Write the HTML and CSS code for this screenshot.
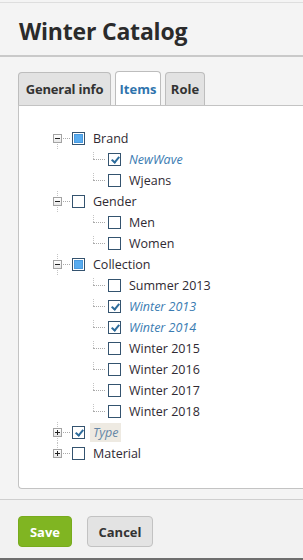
FILE: index.html
```html
<!DOCTYPE html>
<html lang="en">
<head>
    <meta charset="UTF-8">
    <meta name="viewport" content="width=device-width, initial-scale=1.0">
    <title>Winter Catalog</title>
    <link rel="stylesheet" href="styles.css">
</head>
<body>
    <div class="window">
        <header class="titlebar">Winter Catalog</header>
        <div class="body">
            <div class="tabs">
                <div class="tab general">General info</div>
                <div class="tab items active">Items</div>
                <div class="tab role">Role</div>
            </div>
            <div class="panel">
                <ul class="tree">
                    <li>
                        <div class="row root first"><span class="exp minus"></span><span class="link"></span><span class="cb partial"></span><span class="label">Brand</span></div>
                        <ul>
                            <li><div class="row child"><span class="elbow"></span><span class="cb checked"></span><span class="label sel">NewWave</span></div></li>
                            <li><div class="row child"><span class="elbow"></span><span class="cb"></span><span class="label">Wjeans</span></div></li>
                        </ul>
                    </li>
                    <li>
                        <div class="row root"><span class="exp minus"></span><span class="link"></span><span class="cb"></span><span class="label">Gender</span></div>
                        <ul>
                            <li><div class="row child"><span class="elbow"></span><span class="cb"></span><span class="label">Men</span></div></li>
                            <li><div class="row child"><span class="elbow"></span><span class="cb"></span><span class="label">Women</span></div></li>
                        </ul>
                    </li>
                    <li>
                        <div class="row root"><span class="exp minus"></span><span class="link"></span><span class="cb partial"></span><span class="label">Collection</span></div>
                        <ul>
                            <li><div class="row child"><span class="elbow"></span><span class="cb"></span><span class="label">Summer 2013</span></div></li>
                            <li><div class="row child"><span class="elbow"></span><span class="cb checked"></span><span class="label sel">Winter 2013</span></div></li>
                            <li><div class="row child"><span class="elbow"></span><span class="cb checked"></span><span class="label sel">Winter 2014</span></div></li>
                            <li><div class="row child"><span class="elbow"></span><span class="cb"></span><span class="label">Winter 2015</span></div></li>
                            <li><div class="row child"><span class="elbow"></span><span class="cb"></span><span class="label">Winter 2016</span></div></li>
                            <li><div class="row child"><span class="elbow"></span><span class="cb"></span><span class="label">Winter 2017</span></div></li>
                            <li><div class="row child"><span class="elbow"></span><span class="cb"></span><span class="label">Winter 2018</span></div></li>
                        </ul>
                    </li>
                    <li>
                        <div class="row root"><span class="exp plus"></span><span class="link"></span><span class="cb checked"></span><span class="label hover">Type</span></div>
                    </li>
                    <li>
                        <div class="row root last"><span class="exp plus"></span><span class="link"></span><span class="cb"></span><span class="label">Material</span></div>
                    </li>
                </ul>
            </div>
        </div>
        <div class="footer">
            <button class="btn save">Save</button>
            <button class="btn cancel">Cancel</button>
        </div>
    </div>
</body>
</html>
```

FILE: styles.css
```css
html, body {
    margin: 0;
    padding: 0;
    height: 100%;
}
body {
    font-family: "Open Sans", "Noto Sans", sans-serif;
    background-color: #f4f4f4;
    color: #333;
    overflow: hidden;
}
.window {
    height: 558px;
    display: flex;
    flex-direction: column;
    border-bottom: 2px solid #6e6e6e;
}
.titlebar {
    margin-top: 2px;
    border-top: 1px solid #dedede;
    border-bottom: 2px solid #c9c9c9;
    height: 55px;
    box-sizing: border-box;
    padding: 12px 0 0 19px;
    font-size: 23px;
    font-weight: bold;
    color: #2b2b2b;
    letter-spacing: -0.2px;
}
.body {
    flex: 1;
    padding: 15px 0 10px 18px;
    border-bottom: 1px solid #cfcfcf;
    display: flex;
    flex-direction: column;
}
.tabs {
    display: flex;
    gap: 4px;
    height: 33px;
    align-items: flex-end;
}
.tab {
    height: 33px;
    box-sizing: border-box;
    padding-top: 7px;
    text-align: center;
    font-size: 13px;
    font-weight: bold;
    color: #333;
    background-color: #e2e2e2;
    border: 1px solid #bdbdbd;
    border-bottom: none;
    border-radius: 4px 4px 0 0;
    white-space: nowrap;
}
.tab.general {
    width: 93px;
    letter-spacing: -0.2px;
}
.tab.items {
    width: 46px;
}
.tab.role {
    width: 40px;
}
.tab.active {
    height: 35px;
    margin-bottom: -1px;
    padding-top: 8px;
    background-color: #fff;
    color: #2f74ad;
}
.panel {
    flex: 1;
    background-color: #fff;
    border: 1px solid #c3c3c3;
    border-right: none;
    border-radius: 0 0 0 4px;
    padding: 22px 0 0 34px;
}
.tree, .tree ul {
    list-style: none;
    margin: 0;
    padding: 0;
}
.row {
    height: 21px;
    display: flex;
    align-items: center;
    font-size: 12.5px;
}
.root {
    position: relative;
}
.root .exp {
    position: relative;
    width: 9px;
    height: 9px;
    box-sizing: border-box;
    border: 1px solid #a3a3a3;
    background: linear-gradient(#fff, #e8e8e8);
}
.exp::before {
    content: "";
    position: absolute;
    left: 1px;
    top: 3px;
    width: 5px;
    height: 1px;
    background-color: #222;
}
.exp.plus::after {
    content: "";
    position: absolute;
    left: 3px;
    top: 1px;
    width: 1px;
    height: 5px;
    background-color: #222;
}
.root::before, .root::after {
    content: "";
    position: absolute;
    left: 4px;
    width: 0;
    height: 5px;
    border-left: 1px dotted #c4c4c4;
}
.root::before {
    top: 0;
}
.root::after {
    bottom: 0;
}
.root.first::before, .root.last::after {
    display: none;
}
.link {
    width: 7px;
    margin: 0 2px 0 1px;
    border-top: 1px dotted #aaa;
}
.cb {
    position: relative;
    width: 13px;
    height: 13px;
    box-sizing: border-box;
    border: 1px solid #34536f;
    background-color: #fff;
    flex-shrink: 0;
}
.cb.partial::before {
    content: "";
    position: absolute;
    left: 1px;
    top: 1px;
    width: 9px;
    height: 9px;
    box-sizing: border-box;
    background-color: #58acf0;
    border: 1px solid #4a9ade;
}
.cb.checked::before {
    content: "";
    position: absolute;
    left: 4px;
    top: 1px;
    width: 3px;
    height: 6px;
    border: solid #2d6c9c;
    border-width: 0 2px 2px 0;
    transform: rotate(40deg);
}
.label {
    margin-left: 8px;
    color: #2f2a33;
}
.label.sel {
    font-style: italic;
    color: #3b7cb2;
}
.label.hover {
    margin-left: 5px;
    padding: 0 3px;
    font-style: italic;
    color: #6486a6;
    background-color: #eeeae2;
    line-height: 19px;
}
.child {
    padding-left: 40px;
}
.elbow {
    position: relative;
    width: 12px;
    height: 21px;
    margin-right: 3px;
}
.elbow::before {
    content: "";
    position: absolute;
    left: 0;
    top: 3px;
    height: 7px;
    border-left: 1px dotted #c4c4c4;
}
.elbow::after {
    content: "";
    position: absolute;
    left: 0;
    top: 10px;
    width: 12px;
    border-top: 1px dotted #aaa;
}
.footer {
    height: 58px;
    box-sizing: border-box;
    padding: 16px 0 0 18px;
    background-color: #f2f2f2;
    display: flex;
    gap: 15px;
    align-items: flex-start;
}
.btn {
    height: 31px;
    font-family: inherit;
    font-size: 13px;
    font-weight: bold;
    border-radius: 4px;
    cursor: pointer;
}
.btn.save {
    width: 54px;
    background-color: #80b522;
    border: 1px solid #78ab1d;
    color: #fff;
}
.btn.cancel {
    width: 66px;
    background-color: #e3e3e3;
    border: 1px solid #c2c2c2;
    color: #333;
}
```
